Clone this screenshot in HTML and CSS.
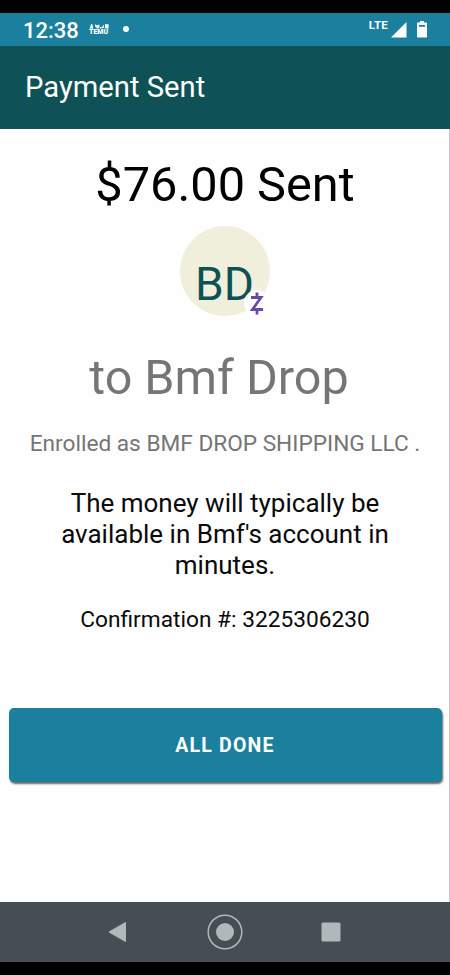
FILE: index.html
```html
<!DOCTYPE html>
<html lang="en">
<head>
    <meta charset="UTF-8">
    <meta name="viewport" content="width=device-width, initial-scale=1.0">
    <title>Payment Sent</title>
    <link rel="stylesheet" href="styles.css">
</head>
<body>
    <div class="screen">
        <div class="status-bar">
            <span class="clock">12:38</span>
            <div class="app-icon">
                <svg viewBox="0 0 20 5" width="20" height="5" fill="currentColor">
                    <path d="M2 0h1.500v2l1 2.600H.6l1-2.600zM6 .3l2.400 1.200 2-.9v2.200L9.600 4.600H8.400L6.200 2.500zM10.800 3h1.600v1.600h-1.600zM12.800 3.200 14.800.6v3.200l-2 .8zM16 .2h3.600v4.400H16z"/>
                </svg>
                <span>TEMU</span>
            </div>
            <span class="dot"></span>
            <span class="network">LTE</span>
            <svg class="signal" viewBox="0 0 16 16" width="16" height="16">
                <path d="M15.500 0v15.500H0z" fill="currentColor"/>
            </svg>
            <svg class="battery" viewBox="0 0 10 17" width="10" height="17">
                <path d="M3 0h4v1.500h2.200q.8 0 .8.8v13.400q0 .8-.8.8H.8q-.8 0-.8-.8V2.300q0-.8.8-.8H3z" fill="currentColor"/>
                <path d="M2 4h6v1.800H2z" fill="#1a809d"/>
            </svg>
        </div>

        <header>
            <h1>Payment Sent</h1>
        </header>

        <main>
            <h2 class="amount">$76.00 Sent</h2>
            <div class="avatar">
                <span class="initials">BD</span>
                <div class="zelle">
                    <svg viewBox="0 0 14 23" width="14" height="23" fill="none" stroke="#6b49a8">
                        <path d="M1 5.500H11L2.500 17.500H13" stroke-width="2.800"/>
                        <path d="M7 .5V5M7 18v4.500" stroke-width="2.800"/>
                    </svg>
                </div>
            </div>
            <h2 class="recipient">to Bmf Drop</h2>
            <p class="enrolled">Enrolled as BMF DROP SHIPPING LLC .</p>
            <p class="message">The money will typically be available in Bmf's account in minutes.</p>
            <p class="confirmation">Confirmation #: 3225306230</p>
            <button class="done-btn">ALL DONE</button>
        </main>

        <nav>
            <svg viewBox="0 0 20 22" width="20" height="22">
                <path d="M17.500 1.500v19L1 11z" fill="#b1b8bb" stroke="#b1b8bb" stroke-linejoin="round"/>
            </svg>
            <svg viewBox="0 0 36 36" width="36" height="36">
                <circle cx="18" cy="18" r="16.800" fill="none" stroke="#b1b8bb" stroke-width="1.500"/>
                <circle cx="18" cy="18" r="9" fill="#b1b8bb"/>
            </svg>
            <svg viewBox="0 0 20 20" width="20" height="20">
                <rect x=".5" y=".5" width="19" height="19" rx="1.500" fill="#b1b8bb"/>
            </svg>
        </nav>
    </div>
</body>
</html>
```
FILE: styles.css
```css
:root {
    --primary-color: #1a809d;
    --header-color: #0e5256;
    --nav-color: #464e54;
    --muted-color: #757575;
}

* {
    box-sizing: border-box;
}

body {
    margin: 0;
    background-color: #000;
    color: #0a0a0a;
    font-family: Roboto, "Liberation Sans", sans-serif;
}

.screen {
    height: 975px;
    padding: 13px 0;
    display: flex;
    flex-direction: column;
}

.status-bar {
    height: 33px;
    padding: 0 23px;
    display: flex;
    align-items: center;
    background-color: var(--primary-color);
    color: #fff;
}

.clock {
    width: 66px;
    padding-top: 2px;
    font-size: 22px;
    font-weight: 500;
}

.app-icon {
    width: 20px;
    display: flex;
    flex-direction: column;
}

.app-icon span {
    font-size: 7px;
    line-height: 7px;
    font-weight: 900;
}

.dot {
    width: 6px;
    height: 6px;
    margin-left: 14px;
    margin-bottom: 1px;
    border-radius: 50%;
    background-color: #fff;
}

.network {
    margin-left: auto;
    padding-bottom: 9px;
    font-size: 11.500px;
    line-height: 12px;
    font-weight: 700;
    letter-spacing: 0.200px;
}

.signal {
    margin-left: 3px;
}

.battery {
    margin-left: 10px;
}

header {
    height: 83px;
    padding-left: 22px;
    display: flex;
    align-items: center;
    background-color: var(--header-color);
}

h1 {
    margin: 0;
    padding: 0 2px 1px;
    border: 1px solid #124d69;
    color: #fff;
    font-size: 29.200px;
    line-height: 38px;
    font-weight: 400;
}

main {
    flex: 1;
    padding: 27px 7px 0 8px;
    display: flex;
    flex-direction: column;
    align-items: center;
    background-color: #fefefe;
    border-right: 1px solid #c8c8c8;
    text-align: center;
}

h2,
p {
    margin: 0;
    font-weight: 400;
}

.amount {
    font-size: 48.700px;
    line-height: 58px;
    color: #000;
}

.avatar {
    position: relative;
    width: 90px;
    height: 90px;
    margin-top: 12px;
    margin-right: 1px;
    padding-top: 30px;
    border-radius: 50%;
    background-color: #f0efdc;
}

.initials {
    color: var(--header-color);
    font-size: 46px;
    line-height: 56px;
}

.zelle {
    position: absolute;
    left: 64px;
    top: 64px;
    width: 26px;
    height: 26px;
    display: flex;
    align-items: center;
    justify-content: center;
    border-radius: 50%;
    background-color: #fefefe;
}

.recipient {
    margin-top: 33px;
    padding-right: 12px;
    color: var(--muted-color);
    font-size: 48.500px;
    line-height: 58px;
}

.enrolled {
    margin-top: 23px;
    color: var(--muted-color);
    font-size: 22.650px;
    line-height: 28px;
    white-space: nowrap;
}

.message {
    width: 350px;
    margin-top: 30px;
    font-size: 26px;
    line-height: 31px;
}

.confirmation {
    margin-top: 25px;
    font-size: 22.700px;
    line-height: 28px;
}

.done-btn {
    align-self: stretch;
    height: 74px;
    margin: 74px 0 0 1px;
    padding: 1px 1px 0 0;
    border: none;
    border-radius: 5px;
    background-color: var(--primary-color);
    box-shadow: 1px 2px 2px rgba(0,0,0,0.6);
    color: #fff;
    font-family: inherit;
    font-size: 19.500px;
    font-weight: 700;
    letter-spacing: 1.200px;
}

nav {
    height: 60px;
    padding: 0 109px 0 108px;
    display: flex;
    align-items: center;
    justify-content: space-between;
    background-color: var(--nav-color);
}
```
